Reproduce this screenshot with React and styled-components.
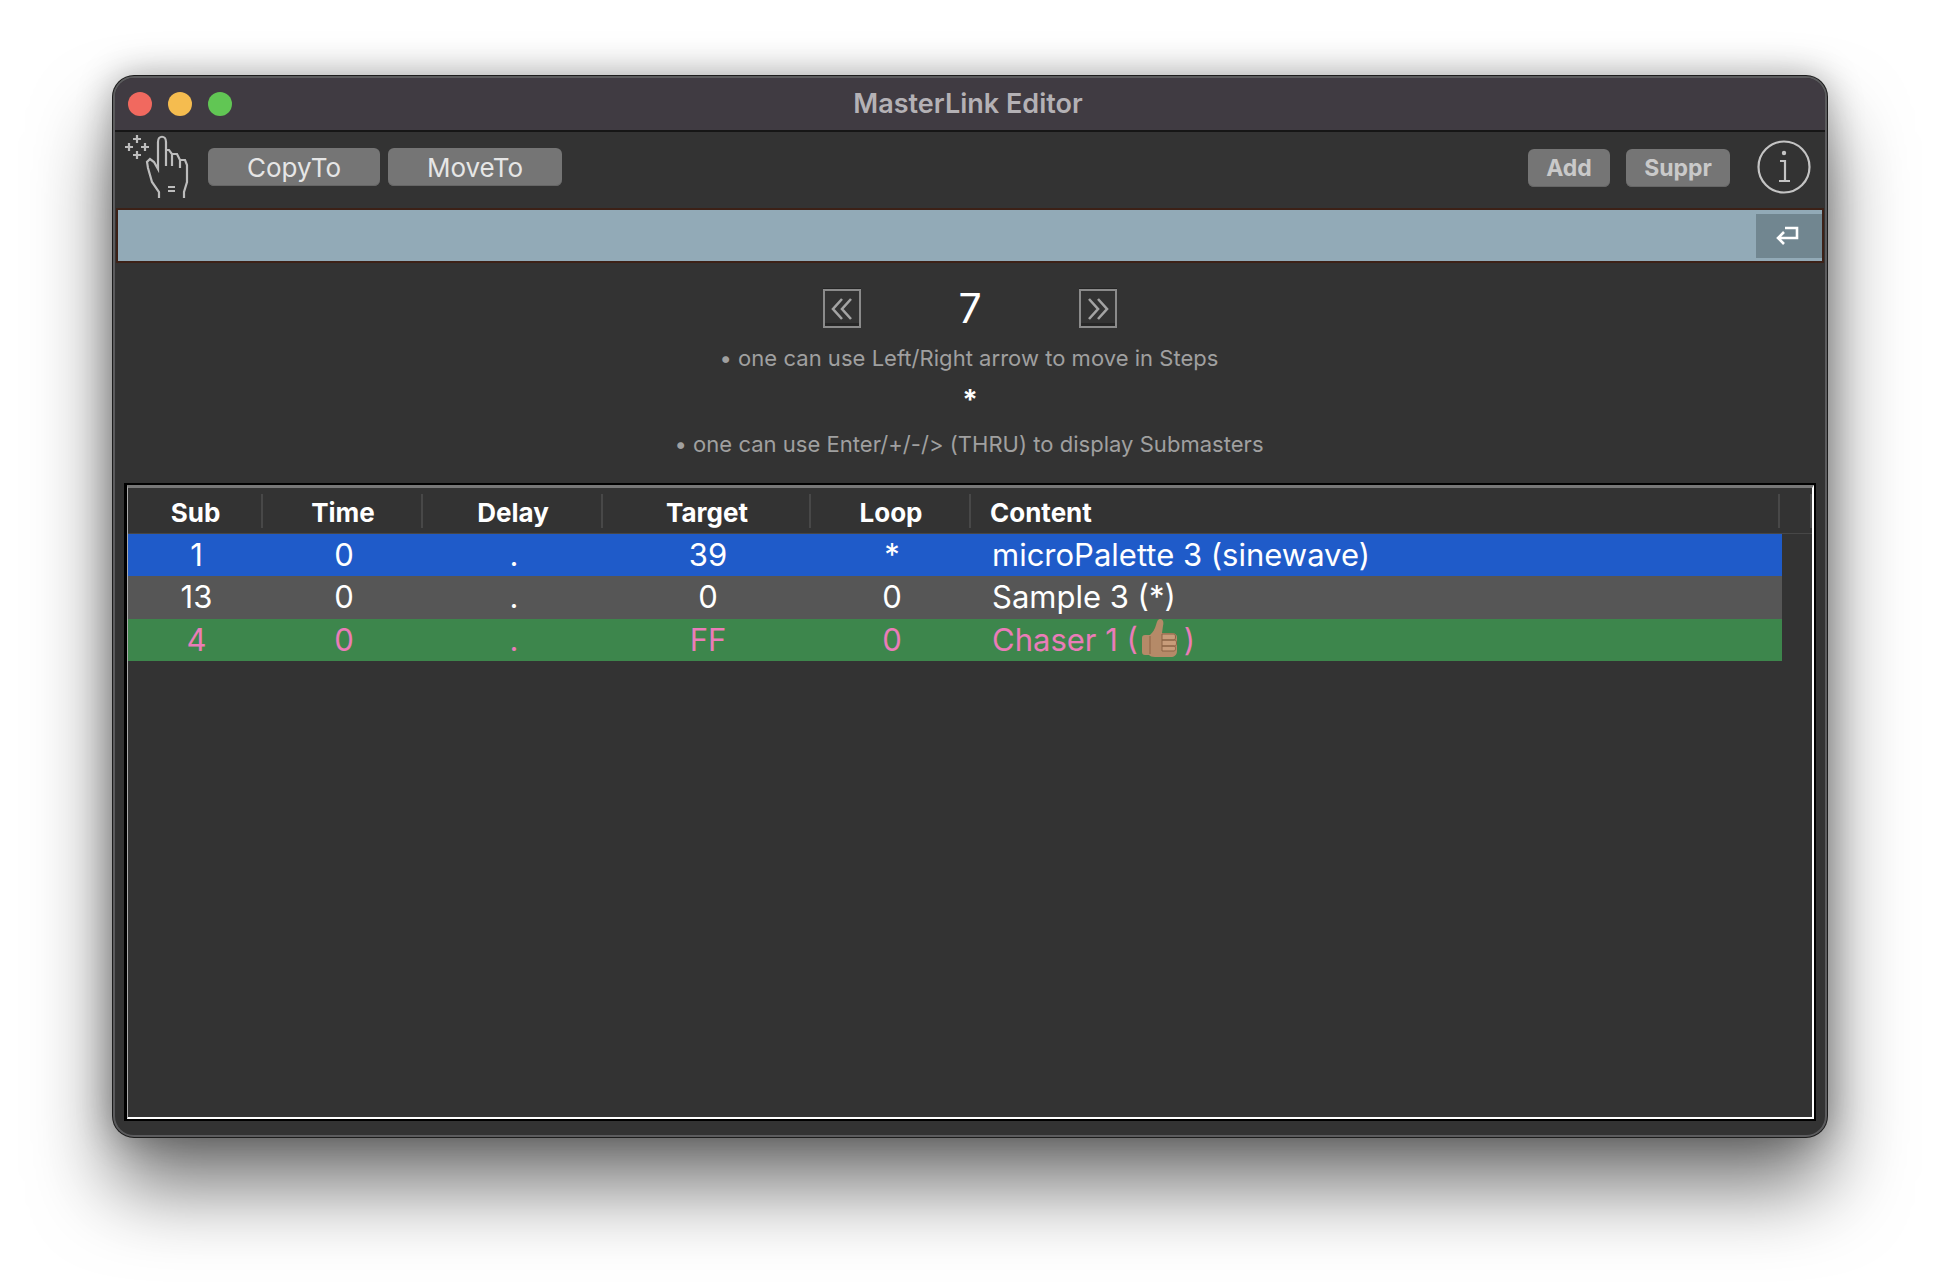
import styled, { createGlobalStyle } from 'styled-components';

const GlobalStyle = createGlobalStyle`
  html, body {
    margin: 0;
    padding: 0;
    background: #fff;
    font-family: Inter, "Liberation Sans", sans-serif;
  }
`;

const Page = styled.div`
  width: 1940px;
  height: 1286px;
  box-sizing: border-box;
  padding: 76px 113px 0;
  overflow: hidden;
`;

const Window = styled.div`
  width: 1714px;
  height: 1061px;
  box-sizing: border-box;
  display: flex;
  flex-direction: column;
  background: #333333;
  border-radius: 21px;
  border: 2px solid #5c5c5e;
  box-shadow: 0 0 0 1px #1c1c1c, 0 50px 80px rgba(0, 0, 0, 0.55), 0 0 36px rgba(0, 0, 0, 0.32);
  overflow: hidden;
`;

const TitleBar = styled.div`
  height: 52px;
  flex: none;
  display: grid;
  grid-template-columns: 1fr auto 1fr;
  align-items: center;
  background: #403b42;
  border-bottom: 2px solid #161616;
`;

const Lights = styled.div`
  display: flex;
  gap: 16px;
  padding-left: 13px;
`;

const Light = styled.span`
  width: 24px;
  height: 24px;
  border-radius: 50%;
  background: ${p => p.$color};
`;

const Title = styled.div`
  color: #b4b1b5;
  font-size: 27px;
  font-weight: 600;
  padding: 0 4px 2px 0;
`;

const Toolbar = styled.div`
  height: 76px;
  flex: none;
  display: flex;
  align-items: center;
  padding: 0 14px 6px 10px;
  box-sizing: border-box;
`;

const HandIcon = styled.svg`
  width: 80px;
  height: 70px;
  margin: -2px 8px 0 -5px;
  align-self: flex-start;
`;

const GrayButton = styled.button`
  height: 38px;
  width: ${p => p.$width}px;
  margin-right: ${p => p.$gap}px;
  margin-top: ${p => (p.$bold ? 2 : 0)}px;
  padding: 0;
  border: 0;
  border-radius: 6px;
  background: #757575;
  box-shadow: inset 0 -1px 0 #666;
  color: ${p => (p.$bold ? '#c9c9c9' : '#e6e6e6')};
  font-family: inherit;
  font-size: ${p => (p.$bold ? 23 : 26)}px;
  font-weight: ${p => (p.$bold ? 700 : 400)};
`;

const Spacer = styled.div`
  flex: 1;
`;

const InfoIcon = styled.svg`
  width: 54px;
  height: 54px;
  margin-left: 27px;
`;

const InputBar = styled.div`
  height: 55px;
  flex: none;
  margin: 0 1px;
  box-sizing: border-box;
  display: flex;
  justify-content: flex-end;
  align-items: center;
  background: #92aab7;
  border: 2px solid #3c2117;
`;

const ReturnKey = styled.div`
  width: 66px;
  height: 44px;
  padding-right: 4px;
  box-sizing: border-box;
  display: flex;
  align-items: center;
  justify-content: center;
  background: #718690;
`;

const Nav = styled.div`
  flex: none;
  display: grid;
  grid-template-columns: 38px 218px 38px;
  justify-content: center;
  align-items: center;
  margin-top: 25px;
  height: 40px;
`;

const NavButton = styled.div`
  width: 38px;
  height: 39px;
  margin-top: 1px;
  box-sizing: border-box;
  display: flex;
  align-items: center;
  justify-content: center;
  background: #333;
  border: 2px solid #8b8b8b;
  box-shadow: 0 -1px 0 #252525, inset 0 -3px 0 #262626;
`;

const StepNumber = styled.div`
  color: #fff;
  font-size: 41px;
  text-align: center;
  line-height: 40px;
`;

const Hint = styled.div`
  color: #a0a0a0;
  font-size: 22px;
  letter-spacing: 0.03px;
  line-height: 30px;
  text-align: center;
  padding-right: 2px;
  margin-top: ${p => p.$top}px;
`;

const Star = styled.div`
  color: #fff;
  font-size: 28px;
  font-weight: 700;
  line-height: 30px;
  text-align: center;
  margin-top: 12px;
`;

const TableFrame = styled.div`
  flex: 1;
  min-height: 0;
  margin: 24px 9px 14px;
  border: 2px solid #000;
  border-left-width: 3px;
`;

const TableInner = styled.div`
  height: 100%;
  box-sizing: border-box;
  border-top: 3px solid #777;
  border-left: 1px solid #aaa;
  border-right: 2px solid #fff;
  border-bottom: 2px solid #fff;
`;

const cols = '135px 160px 180px 208px 160px 809px';

const HeadRow = styled.div`
  height: 46px;
  box-sizing: border-box;
  display: grid;
  grid-template-columns: ${cols} 32px;
  align-items: center;
  border-bottom: 1px solid #474747;
`;

const HeadCell = styled.div`
  height: 34px;
  line-height: 38px;
  color: #fff;
  font-size: 26px;
  font-weight: 700;
  text-align: ${p => (p.$left ? 'left' : 'center')};
  padding-left: ${p => (p.$left ? 19 : 2)}px;
  border-right: 2px solid #484848;
  box-sizing: border-box;
`;

const Row = styled.div`
  width: 1654px;
  height: 42.33px;
  display: grid;
  grid-template-columns: ${cols};
  align-items: center;
  background: ${p => p.$bg};
  color: ${p => p.$color};
  font-size: 31px;
`;

const Cell = styled.div`
  padding-left: ${p => (p.$left ? 21 : 2)}px;
  display: flex;
  justify-content: ${p => (p.$left ? 'flex-start' : 'center')};
  align-items: center;
  line-height: 42px;
`;

const Thumb = styled.svg`
  width: 36px;
  height: 38px;
  margin: -4px 7px 0 3px;
`;

const rows = [
  { bg: '#1f5bc9', color: '#fff', cells: ['1', '0', '.', '39', '*', 'microPalette 3 (sinewave)'] },
  { bg: '#565656', color: '#fff', cells: ['13', '0', '.', '0', '0', 'Sample 3 (*)'] },
  { bg: '#3d864c', color: '#ea7cb8', cells: ['4', '0', '.', 'FF', '0', 'thumb'] },
];

function Hand() {
  return (
    <HandIcon viewBox="0 0 80 70" fill="none" stroke="#bdbdbd" strokeWidth="2.2">
      <path d="M13 9h8M17 5v8M5 17h8M9 13v8M21 17h8M25 13v8M13 25h8M17 21v8" />
      <path d="M39 68v-6l-7-10-4-14-1-6 3-3 4 3 4 7V12c0-7 8-7 8 0v24M45 20h4l3 4v12M52 24h5l3 6v8M60 30h5l2 5v17l-3 10v6" />
      <path d="M48 57h7M48 61h7" />
    </HandIcon>
  );
}

function ThumbUp() {
  return (
    <Thumb viewBox="0 0 36 38">
      <path d="M1 19c0-2 1-3 3-3h5c3-3 5-6 6-10 1-4 2-6 4-6 3 0 4 3 3 7l-1 7h10c3 0 5 2 5 4v14c0 4-3 6-6 6H14c-3 0-5-1-6-2H4c-2 0-3-1-3-3z" fill="#b58a68" />
      <path d="M21 15h12c2 0 2 6 0 6H21zM21 21h13c2 0 2 6 0 6H21zM21 27h12c2 0 2 5 0 5H21z" fill="#c89c7a" stroke="#8a6244" strokeWidth="1" />
      <path d="M9 17v18" stroke="#94694a" strokeWidth="1.2" fill="none" />
    </Thumb>
  );
}

export default function App() {
  return (
    <Page>
      <GlobalStyle />
      <Window>
        <TitleBar>
          <Lights>
            <Light $color="#f1695f" />
            <Light $color="#f5bc4f" />
            <Light $color="#61c654" />
          </Lights>
          <Title>MasterLink Editor</Title>
          <div />
        </TitleBar>
        <Toolbar>
          <Hand />
          <GrayButton $width={172} $gap={8}>CopyTo</GrayButton>
          <GrayButton $width={174} $gap={0}>MoveTo</GrayButton>
          <Spacer />
          <GrayButton $width={82} $gap={16} $bold>Add</GrayButton>
          <GrayButton $width={104} $gap={0} $bold>Suppr</GrayButton>
          <InfoIcon viewBox="0 0 54 54" fill="none" stroke="#c4c4c4">
            <circle cx="27" cy="27" r="25.5" strokeWidth="2.2" />
            <circle cx="27" cy="13" r="2.2" fill="#c4c4c4" stroke="none" />
            <path d="M23 21h5v19M22 41h11" strokeWidth="2.2" />
          </InfoIcon>
        </Toolbar>
        <InputBar>
          <ReturnKey>
            <svg width="24" height="22" viewBox="0 0 24 22" fill="none" stroke="#fff" strokeWidth="2.6">
              <path d="M10 3h12v10H3M9 7l-6 6 6 6" />
            </svg>
          </ReturnKey>
        </InputBar>
        <Nav>
          <NavButton>
            <svg width="24" height="22" viewBox="0 0 24 22" fill="none" stroke="#a4a4a4" strokeWidth="2.6">
              <path d="M12 1L3 11l9 10M21 1l-9 10 9 10" />
            </svg>
          </NavButton>
          <StepNumber>7</StepNumber>
          <NavButton>
            <svg width="24" height="22" viewBox="0 0 24 22" fill="none" stroke="#a4a4a4" strokeWidth="2.6">
              <path d="M3 1l9 10-9 10M12 1l9 10-9 10" />
            </svg>
          </NavButton>
        </Nav>
        <Hint $top={15}>• one can use Left/Right arrow to move in Steps</Hint>
        <Star>*</Star>
        <Hint $top={14}>• one can use Enter/+/-/&gt; (THRU) to display Submasters</Hint>
        <TableFrame>
          <TableInner>
            <HeadRow>
              <HeadCell>Sub</HeadCell>
              <HeadCell>Time</HeadCell>
              <HeadCell>Delay</HeadCell>
              <HeadCell>Target</HeadCell>
              <HeadCell>Loop</HeadCell>
              <HeadCell $left>Content</HeadCell>
              <HeadCell />
            </HeadRow>
            {rows.map(r => (
              <Row key={r.cells[0]} $bg={r.bg} $color={r.color}>
                {r.cells.map((c, i) => (
                  <Cell key={i} $left={i === 5}>
                    {c === 'thumb' ? (
                      <>Chaser 1 (<ThumbUp />)</>
                    ) : c}
                  </Cell>
                ))}
              </Row>
            ))}
          </TableInner>
        </TableFrame>
      </Window>
    </Page>
  );
}
